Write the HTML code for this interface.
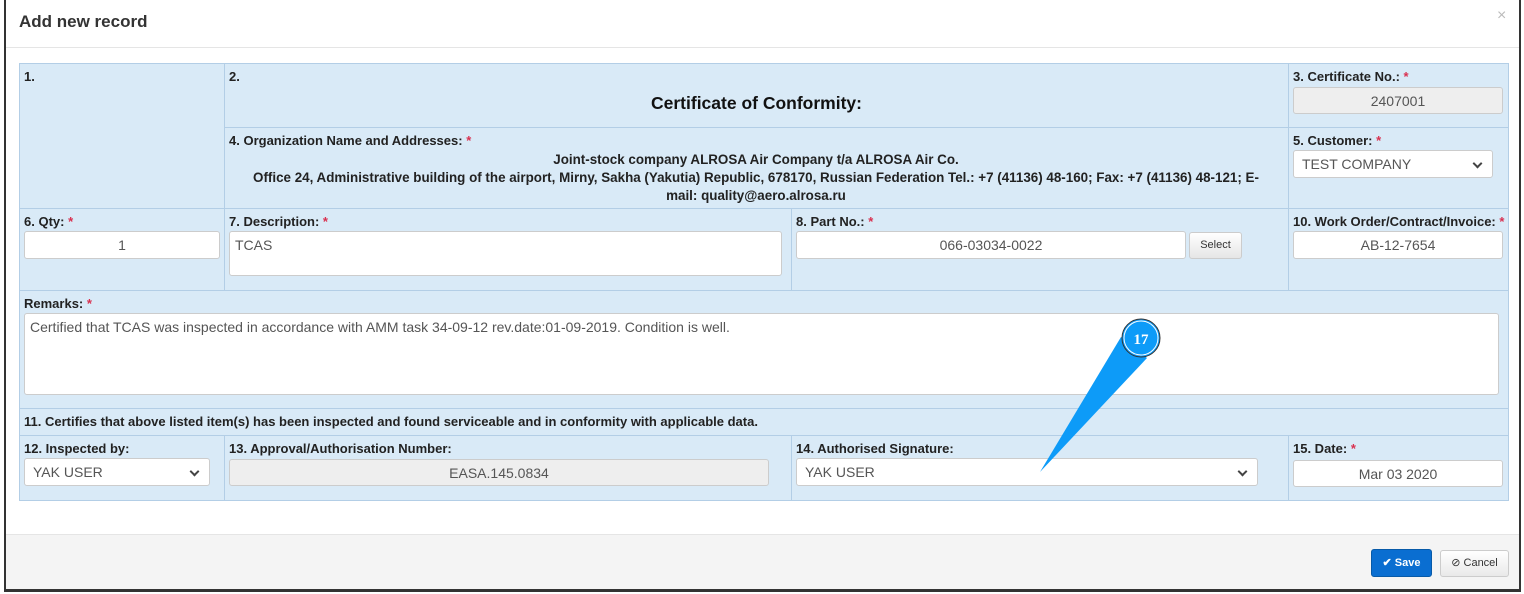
<!DOCTYPE html>
<html><head><style>
*{box-sizing:border-box}
body{margin:0;width:1524px;height:594px;background:#fff;font-family:"Liberation Sans",sans-serif;font-size:13px;color:#333;position:relative;overflow:hidden}
.a{position:absolute}
.c{position:absolute;background:#d9eaf7;border:1px solid #b3cee6}
.l{position:absolute;font-weight:bold;font-size:13px;color:#222}
.r{color:#d9304f}
.in{position:absolute;background:#fff;border:1px solid #ccc;border-radius:3px;font-size:14px;color:#555;padding:6px 5px}
.ctr{text-align:center}
.dis{background:#eee}
.sel{padding-left:8px}
.sel::after{content:"";position:absolute;right:11px;top:9px;width:5px;height:5px;border-right:2px solid #444;border-bottom:2px solid #444;transform:rotate(45deg)}
</style></head><body>
<div class="a" style="left:4px;top:0;width:1517px;height:592px;border-left:2px solid #333;border-right:2px solid #333;border-bottom:3px solid #333"></div>
<div class="a" style="left:6px;top:47px;width:1513px;border-top:1px solid #e5e5e5"></div>
<div class="a" style="left:19px;top:12px;font-size:17px;font-weight:bold;color:#333">Add new record</div>
<div class="a" style="left:1497px;top:7px;font-size:16px;color:#bbb">×</div>

<div class="c" style="left:19px;top:63px;width:206px;height:146px"></div>
<div class="c" style="left:224px;top:63px;width:1065px;height:65px"></div>
<div class="c" style="left:1288px;top:63px;width:221px;height:65px"></div>
<div class="c" style="left:224px;top:127px;width:1065px;height:82px"></div>
<div class="c" style="left:1288px;top:127px;width:221px;height:82px"></div>
<div class="c" style="left:19px;top:208px;width:206px;height:83px"></div>
<div class="c" style="left:224px;top:208px;width:568px;height:83px"></div>
<div class="c" style="left:791px;top:208px;width:498px;height:83px"></div>
<div class="c" style="left:1288px;top:208px;width:221px;height:83px"></div>
<div class="c" style="left:19px;top:290px;width:1490px;height:119px"></div>
<div class="c" style="left:19px;top:408px;width:1490px;height:28px"></div>
<div class="c" style="left:19px;top:435px;width:206px;height:66px"></div>
<div class="c" style="left:224px;top:435px;width:568px;height:66px"></div>
<div class="c" style="left:791px;top:435px;width:498px;height:66px"></div>
<div class="c" style="left:1288px;top:435px;width:221px;height:66px"></div>

<div class="l" style="left:24px;top:69px">1.</div>
<div class="l" style="left:229px;top:69px">2.</div>
<div class="a" style="left:224px;top:93px;width:1065px;text-align:center;font-size:17.5px;font-weight:bold;color:#111">Certificate of Conformity:</div>
<div class="l" style="left:1293px;top:69px">3. Certificate No.: <span class="r">*</span></div>
<div class="in ctr dis" style="left:1293px;top:87px;width:210px;height:27px;padding-top:5px">2407001</div>

<div class="l" style="left:229px;top:133px">4. Organization Name and Addresses: <span class="r">*</span></div>
<div class="a" style="left:228px;top:151px;width:1056px;text-align:center;font-weight:bold;font-size:13.4px;line-height:18px;color:#222;white-space:nowrap">Joint-stock company ALROSA Air Company t/a ALROSA Air Co.<br>Office 24, Administrative building of the airport, Mirny, Sakha (Yakutia) Republic, 678170, Russian Federation Tel.: +7 (41136) 48-160; Fax: +7 (41136) 48-121; E-<br>mail: quality@aero.alrosa.ru</div>
<div class="l" style="left:1293px;top:133px">5. Customer: <span class="r">*</span></div>
<div class="in sel" style="left:1293px;top:150px;width:200px;height:28px;padding-top:5px">TEST COMPANY</div>

<div class="l" style="left:24px;top:214px">6. Qty: <span class="r">*</span></div>
<div class="in ctr" style="left:24px;top:231px;width:196px;height:28px;padding-top:5px">1</div>
<div class="l" style="left:229px;top:214px">7. Description: <span class="r">*</span></div>
<div class="in" style="left:229px;top:231px;width:553px;height:45px;padding-top:5px">TCAS</div>
<div class="l" style="left:796px;top:214px">8. Part No.: <span class="r">*</span></div>
<div class="in ctr" style="left:796px;top:231px;width:390px;height:28px;padding-top:5px">066-03034-0022</div>
<div class="a" style="left:1189px;top:232px;width:53px;height:27px;border:1px solid #ccc;border-radius:3px;background:linear-gradient(#fff,#e6e6e6);font-size:11px;text-align:center;line-height:25px;color:#333">Select</div>
<div class="l" style="left:1293px;top:214px">10. Work Order/Contract/Invoice: <span class="r">*</span></div>
<div class="in ctr" style="left:1293px;top:231px;width:210px;height:28px;padding-top:5px">AB-12-7654</div>

<div class="l" style="left:24px;top:296px">Remarks: <span class="r">*</span></div>
<div class="in" style="left:24px;top:313px;width:1475px;height:82px;padding-top:5px">Certified that TCAS was inspected in accordance with AMM task 34-09-12 rev.date:01-09-2019. Condition is well.</div>

<div class="l" style="left:24px;top:414px">11. Certifies that above listed item(s) has been inspected and found serviceable and in conformity with applicable data.</div>

<div class="l" style="left:24px;top:441px">12. Inspected by:</div>
<div class="in sel" style="left:24px;top:458px;width:186px;height:28px;padding-top:5px">YAK USER</div>
<div class="l" style="left:229px;top:441px">13. Approval/Authorisation Number:</div>
<div class="in ctr dis" style="left:229px;top:459px;width:540px;height:27px;padding-top:5px">EASA.145.0834</div>
<div class="l" style="left:796px;top:441px">14. Authorised Signature:</div>
<div class="in sel" style="left:796px;top:458px;width:462px;height:28px;padding-top:5px">YAK USER</div>
<div class="l" style="left:1293px;top:441px">15. Date: <span class="r">*</span></div>
<div class="in ctr" style="left:1293px;top:460px;width:210px;height:27px;padding-top:5px">Mar 03 2020</div>

<div class="a" style="left:6px;top:534px;width:1513px;height:55px;background:#f4f4f4;border-top:1px solid #e5e5e5"></div>
<div class="a" style="left:1371px;top:549px;width:61px;height:28px;background:#0a6ed1;border:1px solid #075aa8;border-radius:3px;color:#fff;font-weight:bold;font-size:11px;text-align:center;line-height:26px">✔ Save</div>
<div class="a" style="left:1440px;top:550px;width:69px;height:27px;background:linear-gradient(#fff,#e9e9e9);border:1px solid #ccc;border-radius:3px;color:#333;font-size:11px;text-align:center;line-height:25px">⊘ Cancel</div>

<svg class="a" style="left:1030px;top:318px" width="140" height="160">
<polygon points="91,19 117,40 10,154" fill="#0d9bf8"/>
<circle cx="111" cy="20" r="19" fill="#0d9bf8" stroke="#333" stroke-width="1"/>
<circle cx="111" cy="20" r="17" fill="none" stroke="#fff" stroke-width="1"/>
<text x="111" y="26" text-anchor="middle" font-family="Liberation Serif,serif" font-weight="bold" font-size="15" fill="#fff">17</text>
</svg>
</body></html>
